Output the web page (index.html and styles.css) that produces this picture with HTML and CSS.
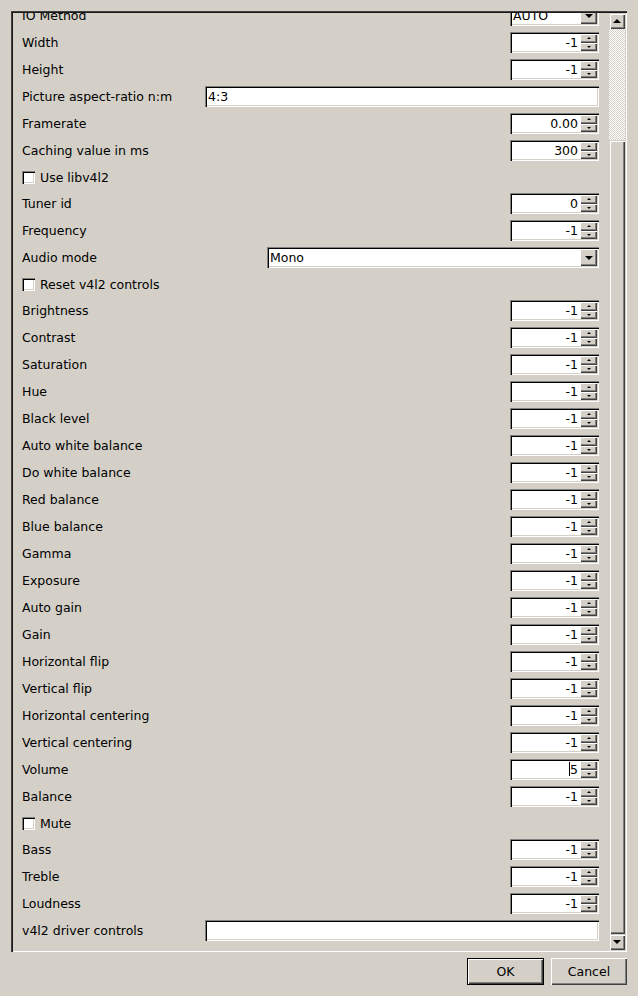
FILE: index.html
```html
<!DOCTYPE html>
<html lang="en">
<head>
    <meta charset="UTF-8">
    <meta name="viewport" content="width=device-width, initial-scale=1.0">
    <title>Video4Linux2 settings</title>
    <link rel="stylesheet" href="styles.css">
</head>
<body>
    <div class="dialog">
        <div class="scroll-frame">
            <div class="viewport">
                <div class="form">
                    <div class="row"><span class="label">IO Method</span><div class="combo small"><span class="combo-text">AUTO</span><span class="drop"><i class="tri-down"></i></span></div></div>
                    <div class="row"><span class="label">Width</span><div class="spin"><span class="val">-1</span><span class="arrows"><span class="arr"><i class="tri-up"></i></span><span class="arr"><i class="tri-dn"></i></span></span></div></div>
                    <div class="row"><span class="label">Height</span><div class="spin"><span class="val">-1</span><span class="arrows"><span class="arr"><i class="tri-up"></i></span><span class="arr"><i class="tri-dn"></i></span></span></div></div>
                    <div class="row"><span class="label">Picture aspect-ratio n:m</span><div class="edit">4:3</div></div>
                    <div class="row"><span class="label">Framerate</span><div class="spin"><span class="val">0.00</span><span class="arrows"><span class="arr"><i class="tri-up"></i></span><span class="arr"><i class="tri-dn"></i></span></span></div></div>
                    <div class="row"><span class="label">Caching value in ms</span><div class="spin"><span class="val">300</span><span class="arrows"><span class="arr"><i class="tri-up"></i></span><span class="arr"><i class="tri-dn"></i></span></span></div></div>
                    <div class="row check-row"><span class="box"></span><span class="label">Use libv4l2</span></div>
                    <div class="row"><span class="label">Tuner id</span><div class="spin"><span class="val">0</span><span class="arrows"><span class="arr"><i class="tri-up"></i></span><span class="arr"><i class="tri-dn"></i></span></span></div></div>
                    <div class="row"><span class="label">Frequency</span><div class="spin"><span class="val">-1</span><span class="arrows"><span class="arr"><i class="tri-up"></i></span><span class="arr"><i class="tri-dn"></i></span></span></div></div>
                    <div class="row"><span class="label">Audio mode</span><div class="combo wide"><span class="combo-text">Mono</span><span class="drop"><i class="tri-down"></i></span></div></div>
                    <div class="row check-row"><span class="box"></span><span class="label">Reset v4l2 controls</span></div>
                    <div class="row"><span class="label">Brightness</span><div class="spin"><span class="val">-1</span><span class="arrows"><span class="arr"><i class="tri-up"></i></span><span class="arr"><i class="tri-dn"></i></span></span></div></div>
                    <div class="row"><span class="label">Contrast</span><div class="spin"><span class="val">-1</span><span class="arrows"><span class="arr"><i class="tri-up"></i></span><span class="arr"><i class="tri-dn"></i></span></span></div></div>
                    <div class="row"><span class="label">Saturation</span><div class="spin"><span class="val">-1</span><span class="arrows"><span class="arr"><i class="tri-up"></i></span><span class="arr"><i class="tri-dn"></i></span></span></div></div>
                    <div class="row"><span class="label">Hue</span><div class="spin"><span class="val">-1</span><span class="arrows"><span class="arr"><i class="tri-up"></i></span><span class="arr"><i class="tri-dn"></i></span></span></div></div>
                    <div class="row"><span class="label">Black level</span><div class="spin"><span class="val">-1</span><span class="arrows"><span class="arr"><i class="tri-up"></i></span><span class="arr"><i class="tri-dn"></i></span></span></div></div>
                    <div class="row"><span class="label">Auto white balance</span><div class="spin"><span class="val">-1</span><span class="arrows"><span class="arr"><i class="tri-up"></i></span><span class="arr"><i class="tri-dn"></i></span></span></div></div>
                    <div class="row"><span class="label">Do white balance</span><div class="spin"><span class="val">-1</span><span class="arrows"><span class="arr"><i class="tri-up"></i></span><span class="arr"><i class="tri-dn"></i></span></span></div></div>
                    <div class="row"><span class="label">Red balance</span><div class="spin"><span class="val">-1</span><span class="arrows"><span class="arr"><i class="tri-up"></i></span><span class="arr"><i class="tri-dn"></i></span></span></div></div>
                    <div class="row"><span class="label">Blue balance</span><div class="spin"><span class="val">-1</span><span class="arrows"><span class="arr"><i class="tri-up"></i></span><span class="arr"><i class="tri-dn"></i></span></span></div></div>
                    <div class="row"><span class="label">Gamma</span><div class="spin"><span class="val">-1</span><span class="arrows"><span class="arr"><i class="tri-up"></i></span><span class="arr"><i class="tri-dn"></i></span></span></div></div>
                    <div class="row"><span class="label">Exposure</span><div class="spin"><span class="val">-1</span><span class="arrows"><span class="arr"><i class="tri-up"></i></span><span class="arr"><i class="tri-dn"></i></span></span></div></div>
                    <div class="row"><span class="label">Auto gain</span><div class="spin"><span class="val">-1</span><span class="arrows"><span class="arr"><i class="tri-up"></i></span><span class="arr"><i class="tri-dn"></i></span></span></div></div>
                    <div class="row"><span class="label">Gain</span><div class="spin"><span class="val">-1</span><span class="arrows"><span class="arr"><i class="tri-up"></i></span><span class="arr"><i class="tri-dn"></i></span></span></div></div>
                    <div class="row"><span class="label">Horizontal flip</span><div class="spin"><span class="val">-1</span><span class="arrows"><span class="arr"><i class="tri-up"></i></span><span class="arr"><i class="tri-dn"></i></span></span></div></div>
                    <div class="row"><span class="label">Vertical flip</span><div class="spin"><span class="val">-1</span><span class="arrows"><span class="arr"><i class="tri-up"></i></span><span class="arr"><i class="tri-dn"></i></span></span></div></div>
                    <div class="row"><span class="label">Horizontal centering</span><div class="spin"><span class="val">-1</span><span class="arrows"><span class="arr"><i class="tri-up"></i></span><span class="arr"><i class="tri-dn"></i></span></span></div></div>
                    <div class="row"><span class="label">Vertical centering</span><div class="spin"><span class="val">-1</span><span class="arrows"><span class="arr"><i class="tri-up"></i></span><span class="arr"><i class="tri-dn"></i></span></span></div></div>
                    <div class="row"><span class="label">Volume</span><div class="spin"><span class="val"><span class="caret"></span>5</span><span class="arrows"><span class="arr"><i class="tri-up"></i></span><span class="arr"><i class="tri-dn"></i></span></span></div></div>
                    <div class="row"><span class="label">Balance</span><div class="spin"><span class="val">-1</span><span class="arrows"><span class="arr"><i class="tri-up"></i></span><span class="arr"><i class="tri-dn"></i></span></span></div></div>
                    <div class="row check-row"><span class="box"></span><span class="label">Mute</span></div>
                    <div class="row"><span class="label">Bass</span><div class="spin"><span class="val">-1</span><span class="arrows"><span class="arr"><i class="tri-up"></i></span><span class="arr"><i class="tri-dn"></i></span></span></div></div>
                    <div class="row"><span class="label">Treble</span><div class="spin"><span class="val">-1</span><span class="arrows"><span class="arr"><i class="tri-up"></i></span><span class="arr"><i class="tri-dn"></i></span></span></div></div>
                    <div class="row"><span class="label">Loudness</span><div class="spin"><span class="val">-1</span><span class="arrows"><span class="arr"><i class="tri-up"></i></span><span class="arr"><i class="tri-dn"></i></span></span></div></div>
                    <div class="row"><span class="label">v4l2 driver controls</span><div class="edit"></div></div>
                </div>
            </div>
            <div class="scrollbar">
                <div class="sb-btn"><i class="tri-sb-up"></i></div>
                <div class="sb-track">
                    <div class="sb-thumb"></div>
                </div>
                <div class="sb-btn"><i class="tri-sb-dn"></i></div>
            </div>
        </div>

        <div class="buttons">
            <button class="btn default">OK</button>
            <button class="btn">Cancel</button>
        </div>
    </div>
</body>
</html>
```

FILE: styles.css
```css
/* Classic grey dialog */
body {
    margin: 0;
    background-color: #d4d0c8;
    font-family: 'DejaVu Sans', sans-serif;
    font-size: 12.5px;
    color: #000;
}

.dialog {
    padding: 11px 0 0 11px;
}

/* Scroll area with sunken frame */
.scroll-frame {
    width: 616px;
    height: 941px;
    box-sizing: border-box;
    padding: 2px;
    display: flex;
    box-shadow: inset 1px 1px #404040, inset 2px 2px #1a1a1a, inset -1px -1px #fff, inset -2px -2px #d4d0c8;
}

.viewport {
    flex: 1;
    overflow: hidden;
}

.form {
    margin-top: -8px;
    padding: 0 10px 0 9px;
    display: flex;
    flex-direction: column;
    gap: 6px;
}

.row {
    display: flex;
    align-items: center;
    height: 21px;
}

.row.check-row {
    height: 20px;
}

.label {
    white-space: nowrap;
}

/* Sunken field look */
.spin,
.edit,
.combo {
    margin-left: auto;
    height: 21px;
    box-sizing: border-box;
    background-color: #fff;
    box-shadow: inset 1px 1px #808080, inset 2px 2px #000, inset -1px -1px #fff, inset -2px -2px #d4d0c8;
    display: flex;
    align-items: center;
}

.spin {
    width: 89px;
    padding: 2px;
}

.spin .val {
    flex: 1;
    text-align: right;
    padding-right: 2px;
    line-height: 17px;
}

.caret {
    display: inline-block;
    width: 1px;
    height: 14px;
    background-color: #000;
    vertical-align: -2px;
}

.arrows {
    width: 17px;
    height: 17px;
    display: flex;
    flex-direction: column;
}

.arr {
    flex: 1;
    display: flex;
    align-items: center;
    justify-content: center;
    background-color: #d4d0c8;
    box-shadow: inset 1px 1px #fff, inset -1px -1px #404040, inset -2px -2px #808080;
}

.tri-up {
    width: 0;
    height: 0;
    border-left: 2px solid transparent;
    border-right: 2px solid transparent;
    border-bottom: 2px solid #000;
}

.tri-dn {
    width: 0;
    height: 0;
    border-left: 2px solid transparent;
    border-right: 2px solid transparent;
    border-top: 2px solid #000;
}

.edit {
    width: 394px;
    padding: 2px 3px;
}

.combo {
    padding: 2px;
}

.combo.small {
    width: 89px;
}

.combo.wide {
    width: 332px;
}

.combo-text {
    flex: 1;
    padding-left: 1px;
}

.drop {
    width: 17px;
    height: 17px;
    display: flex;
    align-items: center;
    justify-content: center;
    background-color: #d4d0c8;
    box-shadow: inset 1px 1px #fff, inset -1px -1px #404040, inset -2px -2px #808080;
}

.tri-down {
    width: 0;
    height: 0;
    border-left: 4px solid transparent;
    border-right: 4px solid transparent;
    border-top: 4px solid #000;
}

/* Check boxes */
.box {
    width: 13px;
    height: 13px;
    box-sizing: border-box;
    margin-right: 5px;
    background-color: #fff;
    box-shadow: inset 1px 1px #808080, inset 2px 2px #000, inset -1px -1px #fff, inset -2px -2px #d4d0c8;
}

/* Scroll bar */
.scrollbar {
    width: 16px;
    display: flex;
    flex-direction: column;
}

.sb-btn {
    height: 16px;
    display: flex;
    align-items: center;
    justify-content: center;
    background-color: #d4d0c8;
    box-shadow: inset 1px 1px #d4d0c8, inset 2px 2px #fff, inset -1px -1px #404040, inset -2px -2px #808080;
}

.tri-sb-up {
    width: 0;
    height: 0;
    border-left: 4px solid transparent;
    border-right: 4px solid transparent;
    border-bottom: 4px solid #000;
}

.tri-sb-dn {
    width: 0;
    height: 0;
    border-left: 4px solid transparent;
    border-right: 4px solid transparent;
    border-top: 4px solid #000;
}

.sb-track {
    flex: 1;
    display: flex;
    flex-direction: column;
    padding-top: 111px;
    background: repeating-conic-gradient(#fff 0 25%, #d4d0c8 0 50%) 0 0 / 2px 2px;
}

.sb-thumb {
    flex: 1;
    background-color: #d4d0c8;
    box-shadow: inset 1px 1px #d4d0c8, inset 2px 2px #fff, inset -1px -1px #404040, inset -2px -2px #808080;
}

/* Dialog buttons */
.buttons {
    display: flex;
    justify-content: flex-end;
    gap: 7px;
    width: 616px;
    margin-top: 6px;
}

.btn {
    width: 76px;
    height: 27px;
    border: none;
    padding: 0;
    background-color: #d4d0c8;
    font-family: 'DejaVu Sans', sans-serif;
    font-size: 12.5px;
    color: #000;
    box-shadow: inset 1px 1px #fff, inset -1px -1px #404040, inset -2px -2px #808080;
}

.btn.default {
    width: 77px;
    box-shadow: inset 0 0 0 1px #000, inset 2px 2px #fff, inset -2px -2px #404040, inset -3px -3px #808080;
}
```
